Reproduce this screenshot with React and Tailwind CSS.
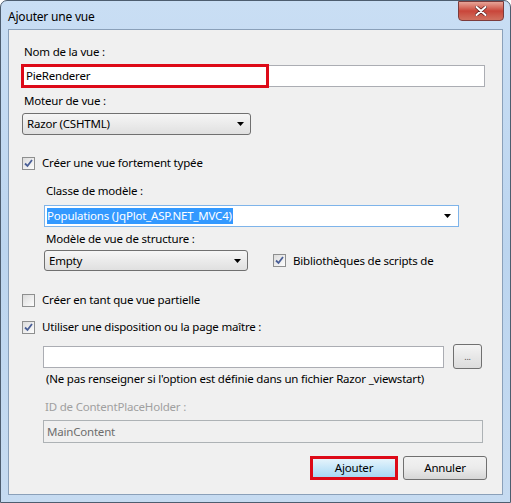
import { useState } from 'react';

const font = { fontFamily: '"Noto Sans", "Open Sans", sans-serif' };

function CheckBox({ checked }) {
  return (
    <span className="flex h-[13px] w-[13px] shrink-0 items-center justify-center border border-[#8e8f8f] bg-gradient-to-br from-[#dcdcdc] to-[#fdfdfd]">
      {checked && (
        <svg width="9" height="9" viewBox="0 0 9 9">
          <path d="M1 4.5 L3.5 7 L8 1" fill="none" stroke="#4a5f97" strokeWidth="1.8" />
        </svg>
      )}
    </span>
  );
}

function Arrow() {
  return (
    <svg width="7" height="4" viewBox="0 0 7 4" className="shrink-0">
      <path d="M0 0 H7 L3.5 4 Z" fill="#000" />
    </svg>
  );
}

function Select({ value, className }) {
  return (
    <div className={`flex items-center justify-between rounded-[3px] border border-[#707070] bg-gradient-to-b from-[#f6f6f6] to-[#e0e0e0] pl-[4px] pr-[6px] ${className}`}>
      <span>{value}</span>
      <Arrow />
    </div>
  );
}

function Check({ checked, label, className = '' }) {
  return (
    <label className={`flex h-[16px] items-center gap-[7px] ${className}`}>
      <CheckBox checked={checked} />
      <span>{label}</span>
    </label>
  );
}

export default function App() {
  const [name] = useState('PieRenderer');

  return (
    <div className="h-[503px] w-[511px] overflow-hidden bg-white text-[11.5px] leading-[16px] tracking-[-0.2px] text-black" style={font}>
      <div className="flex h-[503px] w-[511px] flex-col rounded-t-[7px] border border-[#4d5d6f] bg-gradient-to-b from-[#c9def4] via-[#bcd5ef] to-[#c6dbf1]">
        <div className="relative flex h-[28px] shrink-0 items-center pl-[7px]">
          <span className="mt-[3px] text-[12px] text-black">Ajouter une vue</span>
          <div className="absolute right-[6px] top-[0px] flex h-[20px] w-[46px] items-center justify-center rounded-b-[4px] border border-[#7c3b3b] bg-gradient-to-b from-[#e6a498] via-[#c9453a] to-[#d0705f]">
            <svg width="12" height="10" viewBox="0 0 12 10">
              <path d="M1.5 1 L10.5 9 M10.5 1 L1.5 9" stroke="#5a2020" strokeWidth="3.4" strokeLinecap="round" />
              <path d="M1.5 1 L10.5 9 M10.5 1 L1.5 9" stroke="#fff" strokeWidth="2" strokeLinecap="round" />
            </svg>
          </div>
        </div>

        <div className="mx-[7px] flex h-[466px] flex-col border border-[#8aa0b9] bg-[#f0f0f0] pl-[13px]">
          <div className="mt-[14px] pl-[2px]">Nom de la vue :</div>
          <div className="relative mt-[5px] flex h-[22px] w-[463px] items-center border border-[#abadb3] bg-white pl-[3px]">
            {name}
            <span className="absolute left-[-2px] top-[-2px] h-[24px] w-[248px] border-[3px] border-[#dd0a18]" />
          </div>
          <div className="mt-[6px] pl-[2px]">Moteur de vue :</div>
          <Select value="Razor (CSHTML)" className="mt-[4px] h-[22px] w-[229px]" />

          <Check checked label="Créer une vue fortement typée" className="mt-[20px]" />

          <div className="flex flex-col pl-[22px]">
            <div className="mt-[12px] pl-[2px]">Classe de modèle :</div>
            <div className="mt-[6px] flex h-[22px] w-[415px] items-center justify-between border border-[#7eb4ea] bg-white pl-[2px] pr-[7px]">
              <span className="bg-[#3399ff] pr-[1px] text-white">Populations (JqPlot_ASP.NET_MVC4)</span>
              <Arrow />
            </div>
            <div className="mt-[4px] pl-[2px]">Modèle de vue de structure :</div>
            <div className="mt-[3px] flex items-center gap-[25px]">
              <Select value="Empty" className="h-[21px] w-[204px]" />
              <Check checked label="Bibliothèques de scripts de" />
            </div>
          </div>

          <Check label="Créer en tant que vue partielle" className="mt-[21px]" />
          <Check checked label="Utiliser une disposition ou la page maître :" className="mt-[11px]" />

          <div className="flex flex-col pl-[21px]">
            <div className="mt-[9px] flex items-center gap-[9px]">
              <div className="h-[22px] w-[401px] border border-[#abadb3] bg-white" />
              <div className="flex h-[25px] w-[29px] items-center justify-center rounded-[3px] border border-[#707070] bg-gradient-to-b from-[#f4f4f4] to-[#dcdcdc] text-[9px] leading-none text-[#555]">
                ...
              </div>
            </div>
            <div className="mt-[2px] pl-[3px]">(Ne pas renseigner si l'option est définie dans un fichier Razor _viewstart)</div>
            <div className="mt-[12px] pl-[2px] text-[#a0a0a0]">ID de ContentPlaceHolder :</div>
            <div className="mt-[5px] flex h-[23px] w-[440px] items-center border border-[#adb2b5] bg-[#f0f0f0] pl-[3px] text-[#6d6d6d]">
              MainContent
            </div>
          </div>

          <div className="mt-[13px] flex justify-end gap-[5px] pr-[15px]">
            <div className="flex h-[24px] w-[88px] items-center justify-center border-[3px] border-[#dd0a18] bg-gradient-to-b from-[#e5f4fc] to-[#a7d9f5]">
              Ajouter
            </div>
            <div className="flex h-[24px] w-[84px] items-center justify-center rounded-[3px] border border-[#707070] bg-gradient-to-b from-[#f2f2f2] via-[#ebebeb] to-[#d6d6d6]">
              Annuler
            </div>
          </div>
        </div>
      </div>
    </div>
  );
}
